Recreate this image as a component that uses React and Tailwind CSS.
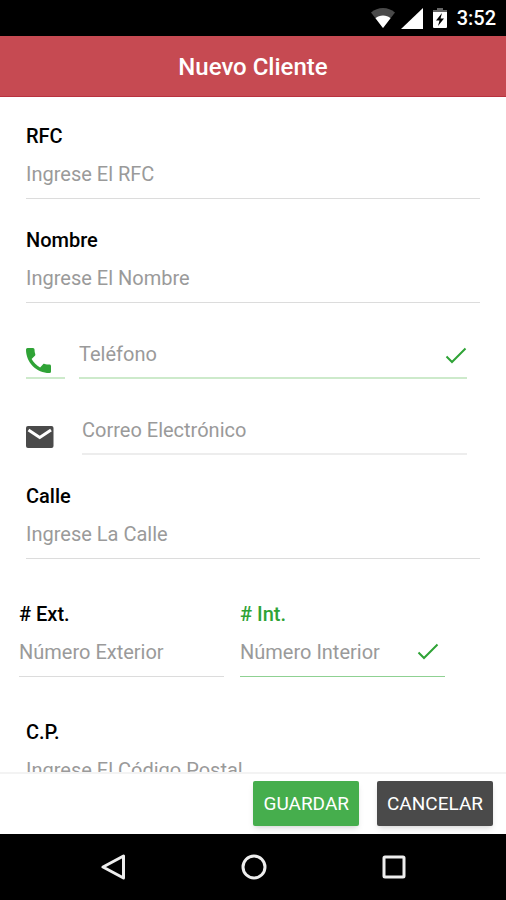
import React, { useState } from 'react';

const inputClass =
  'w-full min-w-0 border-b bg-transparent text-xl text-gray-700 placeholder-[#9a9a9a] outline-none';

function StatusBar() {
  return (
    <div className="flex h-9 shrink-0 items-center justify-end bg-black pr-[10px] text-white">
      <svg viewBox="0 0 24 20" className="mr-[6px] h-5 w-6" aria-hidden="true">
        <path d="M12 20 0 4.500C3.500 1.700 7.500 0 12 0s8.500 1.700 12 4.500z" fill="#4a4a4a" />
        <path d="M12 20 4.500 10.200C6.500 8.500 9 7.500 12 7.500s5.500 1 7.500 2.700z" fill="#fff" />
      </svg>
      <svg viewBox="0 0 22 21" className="mr-[10px] h-[21px] w-[22px]" aria-hidden="true">
        <path d="M22 0v21H0z" fill="#fff" />
      </svg>
      <svg viewBox="0 0 14 20" className="mr-[10px] h-5 w-[14px]" aria-hidden="true">
        <path d="M4 0h6v2h4v3H0V2h4z" fill="#666" />
        <path d="M0 4h14v15a1 1 0 0 1-1 1H1a1 1 0 0 1-1-1z" fill="#fff" />
        <path d="M9 5 3 12.500h3.500L5 18l6-7.500H7.500z" fill="#000" />
      </svg>
      <span className="text-xl font-medium">3:52</span>
    </div>
  );
}

function CheckMark({ className }) {
  return (
    <svg viewBox="0 0 22 17" className={className} fill="none" stroke="#2fa336" strokeWidth="2" aria-hidden="true">
      <path d="M1.500 9.500 7 15 20.500 1.500" />
    </svg>
  );
}

function Field({ id, label, placeholder, value, onChange, valid }) {
  return (
    <div className="flex min-w-0 flex-1 flex-col">
      <label htmlFor={id} className={`text-xl leading-[26px] font-medium ${valid ? 'text-[#2fa336]' : 'text-black'}`}>
        {label}
      </label>
      <div className="relative">
        <input
          id={id}
          name={id}
          type="text"
          placeholder={placeholder}
          value={value}
          onChange={onChange}
          className={`${inputClass} h-[50px] ${valid ? 'border-[#8fd192]' : 'border-[#dcdcdc]'}`}
        />
        {valid && <CheckMark className="absolute top-4 right-[6px] h-[17px] w-[22px]" />}
      </div>
    </div>
  );
}

function App() {
  const [cliente, setCliente] = useState({
    rfc: '',
    nombre: '',
    telefono: '',
    correo: '',
    calle: '',
    numExt: '',
    numInt: '',
    cp: '',
  });

  const handleChange = (e) => {
    const { name, value } = e.target;
    setCliente((prev) => ({ ...prev, [name]: value }));
  };

  return (
    <div className="flex h-screen flex-col bg-white font-['Roboto',sans-serif]">
      <StatusBar />
      <header className="flex h-[61px] shrink-0 items-center justify-center border-b border-[#b8323f] bg-[#c64a52] pt-[2px]">
        <h1 className="text-2xl font-medium text-white">Nuevo Cliente</h1>
      </header>

      <form id="cliente" className="flex min-h-0 flex-1 flex-col overflow-hidden" onSubmit={(e) => e.preventDefault()}>
        <div className="flex shrink-0 flex-col gap-7 px-[26px] pt-[26px]">
          <Field id="rfc" label="RFC" placeholder="Ingrese El RFC" value={cliente.rfc} onChange={handleChange} />
          <Field id="nombre" label="Nombre" placeholder="Ingrese El Nombre" value={cliente.nombre} onChange={handleChange} />

          <div className="flex gap-[14px] pr-[13px]">
            <label htmlFor="telefono" aria-label="Teléfono" className="flex h-12 w-[39px] shrink-0 items-end border-b-2 border-[#cdeacb] pb-1">
              <svg viewBox="0 0 25 25" className="size-[25px]" fill="#2fa336" aria-hidden="true">
                <path d="M1.500 0H7a1.500 1.500 0 0 1 1.500 1.500c0 1.700.3 3.300.8 4.800.1.500 0 1.100-.4 1.500L5.600 11.100c2 3.700 4.900 6.500 8.500 8.300l3-3.200c.4-.4 1-.5 1.500-.3 1.500.5 3.200.7 4.900.7A1.500 1.500 0 0 1 25 18v5.500a1.500 1.500 0 0 1-1.500 1.500C10.500 25 0 14.500 0 1.500A1.500 1.500 0 0 1 1.500 0z" />
              </svg>
            </label>
            <div className="relative flex-1">
              <input
                id="telefono"
                name="telefono"
                type="tel"
                placeholder="Teléfono"
                value={cliente.telefono}
                onChange={handleChange}
                className={`${inputClass} h-12 border-b-2 border-[#cdeacb]`}
              />
              <CheckMark className="absolute top-4 right-0 h-[17px] w-[22px]" />
            </div>
          </div>

          <div className="flex pr-[13px]">
            <label htmlFor="correo" aria-label="Correo Electrónico" className="flex h-12 w-14 shrink-0 items-end pb-[7px]">
              <svg viewBox="0 0 28 22" className="h-[22px] w-7" aria-hidden="true">
                <rect width="27.500" height="22" rx="2" fill="#4a4a4a" />
                <path d="M2.500 4 13.750 11.500 25 4" fill="none" stroke="#fff" strokeWidth="3" />
              </svg>
            </label>
            <input
              id="correo"
              name="correo"
              type="email"
              placeholder="Correo Electrónico"
              value={cliente.correo}
              onChange={handleChange}
              className={`${inputClass} h-12 border-b-2 border-[#ededed]`}
            />
          </div>

          <Field id="calle" label="Calle" placeholder="Ingrese La Calle" value={cliente.calle} onChange={handleChange} />

          <div className="-ml-[7px] flex gap-4 py-[14px] pr-[35px]">
            <Field id="numExt" label="# Ext." placeholder="Número Exterior" value={cliente.numExt} onChange={handleChange} />
            <Field id="numInt" label="# Int." placeholder="Número Interior" value={cliente.numInt} onChange={handleChange} valid />
          </div>

          <Field id="cp" label="C.P." placeholder="Ingrese El Código Postal" value={cliente.cp} onChange={handleChange} />
        </div>
      </form>

      <footer className="flex h-[62px] shrink-0 justify-end gap-[18px] border-t-2 border-[#f3f3f3] bg-white px-[13px] pt-[7px]">
        <button
          type="submit"
          form="cliente"
          className="h-[45px] rounded-xs bg-[#46ae4d] px-[10px] pt-[2px] text-[19px] text-white shadow-md"
        >
          GUARDAR
        </button>
        <button type="button" className="h-[45px] rounded-xs bg-[#4a4a4a] px-[10px] pt-[2px] text-[19px] text-white shadow-md">
          CANCELAR
        </button>
      </footer>

      <nav className="flex h-[66px] shrink-0 items-center justify-center gap-[114px] bg-black pl-[2px]">
        <button type="button" aria-label="Atrás">
          <svg viewBox="0 0 26 28" className="h-7 w-[26px]" fill="none" stroke="#eee" strokeWidth="3">
            <path d="M22.500 3v22L2 14z" strokeLinejoin="round" />
          </svg>
        </button>
        <button type="button" aria-label="Inicio">
          <svg viewBox="0 0 26 26" className="size-[26px]" fill="none" stroke="#eee" strokeWidth="3">
            <circle cx="13" cy="13" r="11" />
          </svg>
        </button>
        <button type="button" aria-label="Recientes">
          <svg viewBox="0 0 26 26" className="size-[26px]" fill="none" stroke="#eee" strokeWidth="3">
            <rect x="3" y="3" width="20" height="20" rx="1" />
          </svg>
        </button>
      </nav>
    </div>
  );
}

export default App;
